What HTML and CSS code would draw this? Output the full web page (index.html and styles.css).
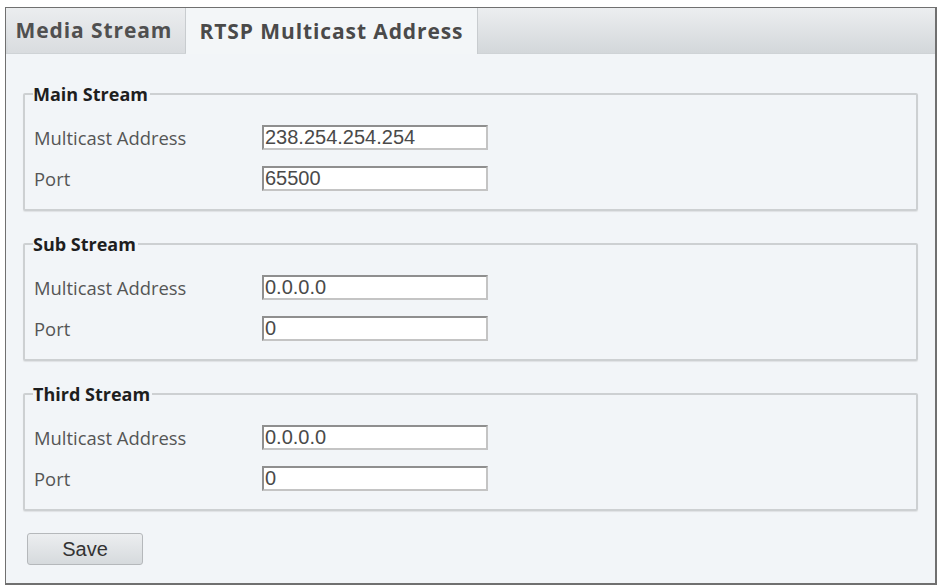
FILE: index.html
```html
<!DOCTYPE html>
<html>
<head>
<meta charset="utf-8">
<link rel="stylesheet" href="styles.css">
</head>
<body>
<div class="frame">
  <div class="tabbar">
    <div class="tab">Media Stream</div>
    <div class="tab active">RTSP Multicast Address</div>
  </div>
  <div class="content">
    <fieldset class="group">
      <legend>Main Stream</legend>
      <div class="row"><span class="label">Multicast Address</span><input class="field" value="238.254.254.254"></div>
      <div class="row"><span class="label">Port</span><input class="field" value="65500"></div>
    </fieldset>
    <fieldset class="group">
      <legend>Sub Stream</legend>
      <div class="row"><span class="label">Multicast Address</span><input class="field" value="0.0.0.0"></div>
      <div class="row"><span class="label">Port</span><input class="field" value="0"></div>
    </fieldset>
    <fieldset class="group">
      <legend>Third Stream</legend>
      <div class="row"><span class="label">Multicast Address</span><input class="field" value="0.0.0.0"></div>
      <div class="row"><span class="label">Port</span><input class="field" value="0"></div>
    </fieldset>
    <div class="actions"><button class="btn">Save</button></div>
  </div>
</div>
</body>
</html>
```
FILE: styles.css
```css
html, body {
  margin: 0;
  padding: 0;
  background: #ffffff;
}
.frame {
  margin: 7px 0 0 5px;
  width: 929px;
  height: 575px;
  border: 2px solid #707070;
  border-left-width: 1px;
  border-top-width: 1px;
  background: #f2f5f8;
  font-family: "Open Sans", sans-serif;
  box-sizing: content-box;
}
.tabbar {
  display: flex;
  height: 45px;
  padding-left: 2px;
  background: linear-gradient(#eceef0, #d3d7da);
  border-bottom: 1px solid #cfd3d6;
}
.tab {
  display: flex;
  align-items: center;
  justify-content: center;
  font-weight: bold;
  font-size: 21px;
  letter-spacing: 0.9px;
  color: #505050;
  height: 45px;
  box-sizing: border-box;
  padding-bottom: 1px;
}
.tab:first-child {
  width: 178px;
  padding-right: 5px;
  background: linear-gradient(#ebedef, #d9dcdf);
  border-right: 1px solid #c8cccf;
}
.tab.active {
  width: 292px;
  height: 46px;
  background: #f3f6f8;
  border-right: 1px solid #c8cccf;
  color: #4a4a4a;
}
.content {
  display: flex;
  flex-direction: column;
  gap: 21px;
  padding: 28px 17px 0 17px;
}
.group {
  margin: 0;
  padding: 11px 0 10px 9px;
  border: 2px solid #cdd0d2;
  border-radius: 2px;
  box-shadow: 0 1px 1px #dfe2e4;
}
.group legend {
  padding: 0 2px 0 0;
  font-weight: bold;
  font-size: 18px;
  line-height: 24px;
  color: #1e1e1e;
  margin-left: -1px;
}
.row {
  display: flex;
  align-items: center;
  height: 41px;
}
.label {
  width: 228px;
  font-size: 18.4px;
  color: #555555;
}
.field {
  width: 226px;
  height: 25px;
  box-sizing: border-box;
  border: 2px solid #8f8f8f;
  border-right-color: #c4c4c4;
  border-bottom-color: #c4c4c4;
  background: #ffffff;
  font-family: "Liberation Sans", Arial, sans-serif;
  font-size: 20px;
  color: #4a4a4a;
  padding: 0 1px;
  margin: 0;
}
.actions {
  margin-top: 1px;
  padding-left: 4px;
}
.btn {
  width: 116px;
  height: 32px;
  border: 1px solid #b5b8bb;
  border-radius: 3px;
  background: linear-gradient(#eceef0, #d6dadd);
  font-family: "Liberation Sans", Arial, sans-serif;
  font-size: 20px;
  color: #333333;
  padding: 0;
}
```
